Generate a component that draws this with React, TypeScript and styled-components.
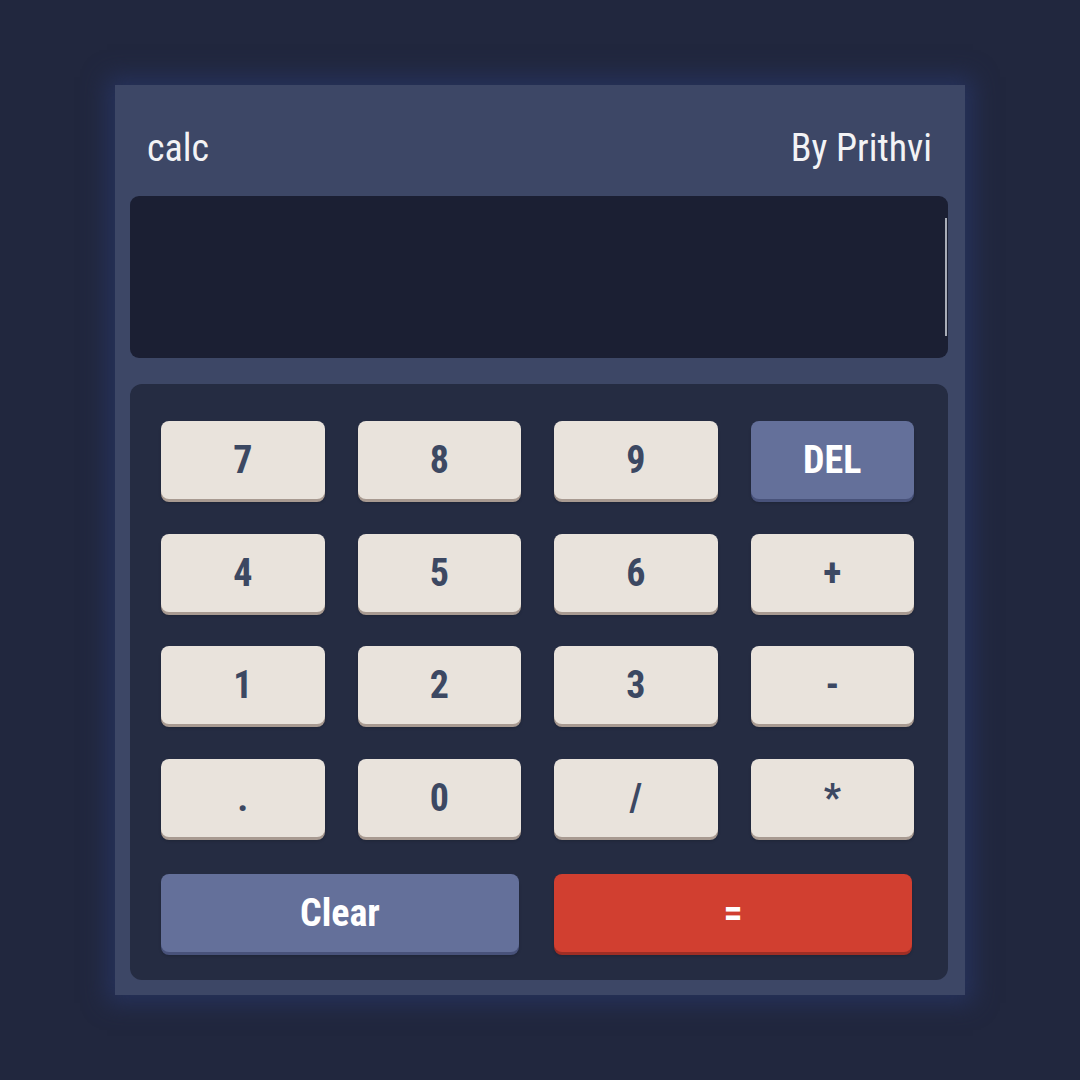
import React from "react";
import styled, { createGlobalStyle } from "styled-components";

const GlobalStyle = createGlobalStyle`
  * { box-sizing: border-box; }
  body {
    margin: 0;
    background: #21273e;
    font-family: "Roboto Condensed", Roboto, "Liberation Sans", sans-serif;
    font-stretch: 80%;
  }
`;

const Page = styled.div`
  min-height: 100vh;
  display: flex;
  align-items: center;
  justify-content: center;
`;

const Card = styled.div`
  width: 850px;
  height: 910px;
  padding: 15px 17px 15px 15px;
  background: #3d4766;
  box-shadow: 0 0 22px 8px #26325c;
  display: flex;
  flex-direction: column;
`;

const Header = styled.header`
  height: 96px;
  display: flex;
  align-items: center;
  justify-content: space-between;
  padding: 0 16px 0 17px;
  color: #f3f3f5;
  font-size: 38px;
  font-stretch: 87%;
  font-weight: 400;
`;

const Display = styled.div`
  position: relative;
  height: 162px;
  border-radius: 9px;
  background: #1b1f33;
  flex-shrink: 0;
`;

const Caret = styled.span`
  position: absolute;
  right: 1px;
  top: 22px;
  width: 2px;
  height: 118px;
  background: #a9adb8;
`;

const Keypad = styled.div`
  margin-top: 26px;
  flex: 1;
  border-radius: 12px;
  background: #252c42;
  padding: 37px 34px 0 31px;
  display: grid;
  grid-template-columns: repeat(4, 1fr);
  grid-auto-rows: 78px;
  column-gap: 33px;
  row-gap: 34.5px;
  align-content: start;
`;

type Tone = "light" | "slate" | "red";

const tones: Record<Tone, { bg: string; edge: string; fg: string }> = {
  light: { bg: "#e9e3dc", edge: "#a89a91", fg: "#3c4862" },
  slate: { bg: "#64709a", edge: "#48527a", fg: "#ffffff" },
  red: { bg: "#d13f30", edge: "#9f2e25", fg: "#ffffff" },
};

const Key = styled.button<{ $tone: Tone }>`
  border: none;
  border-radius: 8px;
  padding: 0;
  height: 78px;
  cursor: pointer;
  font-family: inherit;
  font-stretch: 80%;
  font-size: 38px;
  font-weight: 700;
  background: ${({ $tone }) => tones[$tone].bg};
  color: ${({ $tone }) => tones[$tone].fg};
  box-shadow: 0 3px 0 ${({ $tone }) => tones[$tone].edge},
    0 4px 3px rgba(0, 0, 0, 0.18);
`;

const BottomRow = styled.div`
  grid-column: 1 / -1;
  display: grid;
  grid-template-columns: 358px 358px;
  column-gap: 35px;
  margin-top: 2.5px;
  height: 78px;
`;

const keys: { label: string; tone: Tone }[] = [
  { label: "7", tone: "light" },
  { label: "8", tone: "light" },
  { label: "9", tone: "light" },
  { label: "DEL", tone: "slate" },
  { label: "4", tone: "light" },
  { label: "5", tone: "light" },
  { label: "6", tone: "light" },
  { label: "+", tone: "light" },
  { label: "1", tone: "light" },
  { label: "2", tone: "light" },
  { label: "3", tone: "light" },
  { label: "-", tone: "light" },
  { label: ".", tone: "light" },
  { label: "0", tone: "light" },
  { label: "/", tone: "light" },
  { label: "*", tone: "light" },
];

export default function App() {
  return (
    <>
      <GlobalStyle />
      <Page>
        <Card>
          <Header>
            <span>calc</span>
            <span>By Prithvi</span>
          </Header>
          <Display>
            <Caret />
          </Display>
          <Keypad>
            {keys.map((k) => (
              <Key key={k.label} $tone={k.tone}>
                {k.label}
              </Key>
            ))}
            <BottomRow>
              <Key $tone="slate">Clear</Key>
              <Key $tone="red">=</Key>
            </BottomRow>
          </Keypad>
        </Card>
      </Page>
    </>
  );
}
